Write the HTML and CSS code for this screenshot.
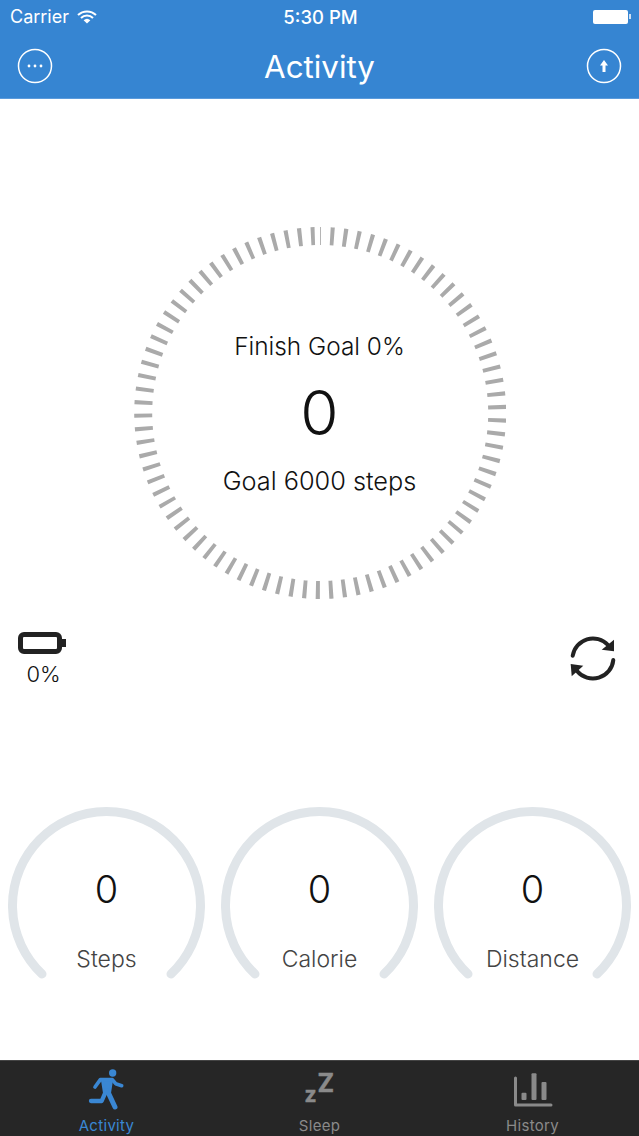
FILE: index.html
```html
<!DOCTYPE html>
<html lang="en">
<head>
  <meta charset="UTF-8">
  <meta name="viewport" content="width=device-width, initial-scale=1.0">
  <title>Activity</title>
  <link rel="stylesheet" href="styles.css">
</head>
<body>

  <!-- Status bar + nav -->
  <header class="top">
    <div class="status">
      <div class="status-left">
        <span>Carrier</span>
        <svg class="wifi" viewBox="0 0 20 14" width="20" height="14">
          <path d="M1 5 A13 13 0 0 1 19 5" fill="none" stroke="#fff" stroke-width="2"/>
          <path d="M4 8 A8.5 8.5 0 0 1 16 8" fill="none" stroke="#fff" stroke-width="2"/>
          <path d="M10 13.5 L6.6 10.3 A5 5 0 0 1 13.4 10.3 Z" fill="#fff"/>
        </svg>
      </div>
      <div class="status-time">5:30 PM</div>
      <div class="status-right">
        <span class="batt-body"></span><span class="batt-tip"></span>
      </div>
    </div>
    <nav class="nav">
      <svg viewBox="0 0 36 36" width="36" height="36">
        <circle cx="18" cy="18" r="16.5" fill="none" stroke="#fff" stroke-width="1.5"/>
        <circle cx="12" cy="18" r="1.4" fill="#fff"/>
        <circle cx="18" cy="18" r="1.4" fill="#fff"/>
        <circle cx="24" cy="18" r="1.4" fill="#fff"/>
      </svg>
      <h1>Activity</h1>
      <svg viewBox="0 0 36 36" width="36" height="36">
        <circle cx="18" cy="18" r="16.5" fill="none" stroke="#fff" stroke-width="1.5"/>
        <path d="M18 12 L22 17.5 H19.5 V24 H16.5 V17.5 H14 Z" fill="#fff"/>
      </svg>
    </nav>
  </header>

  <main class="content">
    <section class="dial">
      <svg class="dial-ring" viewBox="0 0 372 372" width="372" height="372">
        <path class="ticks" d="M196.2 9.3 A177 177 0 1 1 180.8 9.1"/>
        <line x1="186.500" y1="0" x2="186.500" y2="18" stroke="#b5b5b5" stroke-width="1"/>
      </svg>
      <div class="dial-text">
        <div class="dial-goal">Finish Goal 0%</div>
        <div class="dial-value">0</div>
        <div class="dial-steps">Goal 6000 steps</div>
      </div>
    </section>

    <section class="device">
      <div class="battery">
        <svg viewBox="0 0 48 22" width="48" height="22">
          <rect x="2.500" y="2.500" width="39" height="17" rx="3.500" fill="none" stroke="#222" stroke-width="5"/>
          <rect x="44" y="7" width="4" height="8" fill="#222"/>
        </svg>
        <span>0%</span>
      </div>
      <svg class="sync" viewBox="0 0 48 48" width="48" height="48">
        <path d="M2.700 20.700 A20.500 20.500 0 0 1 38 10" fill="none" stroke="#222" stroke-width="4" stroke-linecap="round"/>
        <path d="M44 4.700 V16.300 L31.700 14.700 Z" fill="#222"/>
        <path d="M43.300 25 A20.500 20.500 0 0 1 7 36" fill="none" stroke="#222" stroke-width="4" stroke-linecap="round"/>
        <path d="M0.700 29 L13.300 30.700 L1.700 41.300 Z" fill="#222"/>
      </svg>
    </section>

    <section class="gauges">
      <div class="gauge">
        <svg viewBox="0 0 197 175" width="197" height="175">
          <path class="gauge-arc" d="M34 168 A94 94 0 1 1 163 168"/>
        </svg>
        <div class="gauge-value">0</div>
        <div class="gauge-label">Steps</div>
      </div>
      <div class="gauge">
        <svg viewBox="0 0 197 175" width="197" height="175">
          <path class="gauge-arc" d="M34 168 A94 94 0 1 1 163 168"/>
        </svg>
        <div class="gauge-value">0</div>
        <div class="gauge-label">Calorie</div>
      </div>
      <div class="gauge">
        <svg viewBox="0 0 197 175" width="197" height="175">
          <path class="gauge-arc" d="M34 168 A94 94 0 1 1 163 168"/>
        </svg>
        <div class="gauge-value">0</div>
        <div class="gauge-label">Distance</div>
      </div>
    </section>
  </main>

  <footer class="tabbar">
    <div class="tab active">
      <svg viewBox="260 55 120 126" width="40" height="42">
        <circle cx="337" cy="70" r="11" fill="#3a87d3"/>
        <path d="M284 112 L300 90 H336 L346 102 L364 108" fill="none" stroke="#3a87d3" stroke-width="11" stroke-linecap="round" stroke-linejoin="round"/>
        <path d="M306 92 H334 L328 130 H312 Z" fill="#3a87d3" stroke="#3a87d3" stroke-width="8" stroke-linejoin="round"/>
        <path d="M322 125 L344 172" fill="none" stroke="#3a87d3" stroke-width="15" stroke-linecap="round"/>
        <path d="M318 122 L304 154 H272" fill="none" stroke="#3a87d3" stroke-width="13" stroke-linecap="round" stroke-linejoin="round"/>
      </svg>
      <span>Activity</span>
    </div>
    <div class="tab">
      <svg viewBox="0 0 40 42" width="40" height="42">
        <text x="4.500" y="34" class="zz-small">z</text>
        <text x="17.500" y="24" class="zz-big">Z</text>
      </svg>
      <span>Sleep</span>
    </div>
    <div class="tab">
      <svg viewBox="0 0 40 42" width="40" height="42">
        <path d="M2.500 10 V37 H38" fill="none" stroke="#8a8a8a" stroke-width="3" stroke-linecap="round" stroke-linejoin="round"/>
        <rect x="8.500" y="24.700" width="5" height="7.300" rx="1" fill="#8a8a8a"/>
        <rect x="18.500" y="5.300" width="5" height="26.700" rx="1" fill="#8a8a8a"/>
        <rect x="28.500" y="14" width="5" height="18" rx="1" fill="#8a8a8a"/>
      </svg>
      <span>History</span>
    </div>
  </footer>

</body>
</html>
```

FILE: styles.css
```css
* {
  box-sizing: border-box;
}
html, body {
  margin: 0;
  padding: 0;
}
body {
  width: 639px;
  height: 1136px;
  display: flex;
  flex-direction: column;
  background-color: #fff;
  color: #111;
  font-family: Inter, "Liberation Sans", sans-serif;
  overflow: hidden;
}

/* top blue bar */
.top {
  height: 99px;
  background-color: #3685d2;
  border-bottom: 1px solid #5b9bdc;
  color: #fff;
  padding: 0 10px;
}
.status {
  height: 33px;
  margin-right: -2px;
  display: grid;
  grid-template-columns: 1fr auto 1fr;
  align-items: center;
  font-size: 18px;
}
.status-left {
  display: flex;
  align-items: center;
  gap: 8px;
}
.status-time {
  font-size: 18.500px;
  font-weight: 500;
}
.status-right {
  display: flex;
  justify-content: flex-end;
  align-items: center;
}
.batt-body {
  width: 35px;
  height: 14px;
  background-color: #fff;
  border-radius: 2px;
}
.batt-tip {
  width: 2px;
  height: 5px;
  margin-left: 1px;
  background-color: #cfe0f3;
}
.nav {
  display: flex;
  justify-content: space-between;
  align-items: center;
  padding: 0 7px;
  height: 66px;
}
.nav h1 {
  margin: 2px 0 0;
  font-size: 31.300px;
  font-weight: 400;
}

.content {
  flex: 1;
  display: flex;
  flex-direction: column;
}

/* big dial */
.dial {
  display: grid;
  justify-content: center;
  align-items: center;
  padding-top: 128px;
}
.dial-ring, .dial-text {
  grid-area: 1 / 1;
}
.ticks {
  fill: none;
  stroke: #aaa;
  stroke-width: 18;
  stroke-dasharray: 4 9;
}
.dial-text {
  text-align: center;
  font-weight: 300;
}
.dial-goal {
  font-size: 24.400px;
}
.dial-steps {
  font-size: 25.300px;
}
.dial-value {
  font-size: 62px;
  line-height: 80px;
  margin: 12px 0;
}

/* battery + sync row */
.device {
  display: flex;
  justify-content: space-between;
  padding: 33px 21px 0 18px;
}
.battery {
  display: flex;
  flex-direction: column;
  align-items: center;
  width: 48px;
  gap: 7px;
  font-size: 22px;
  font-weight: 300;
}
.battery span {
  margin-left: 3px;
}
.sync {
  margin-top: 3px;
}

/* three small gauges */
.gauges {
  display: flex;
  justify-content: space-between;
  padding: 119px 8px 0;
}
.gauge {
  display: grid;
  justify-items: center;
  width: 197px;
}
.gauge svg {
  grid-area: 1 / 1;
}
.gauge-arc {
  fill: none;
  stroke: #e0e5e9;
  stroke-width: 9;
  stroke-linecap: round;
}
.gauge-value {
  grid-area: 1 / 1;
  font-size: 38px;
  font-weight: 300;
  margin-top: 60px;
}
.gauge-label {
  grid-area: 1 / 1;
  font-size: 23px;
  font-weight: 300;
  color: #444;
  margin-top: 139px;
}

/* bottom tabs */
.tabbar {
  height: 76px;
  display: grid;
  grid-template-columns: repeat(3, 213px);
  background-color: #262626;
  border-top: 1px solid #444;
}
.tab {
  display: flex;
  flex-direction: column;
  align-items: center;
  padding-top: 7px;
  font-size: 15px;
  color: #8a8a8a;
}
.tab span {
  margin-top: 6px;
  letter-spacing: 0.3px;
}
.tab.active {
  color: #3a87d3;
}
.zz-small, .zz-big {
  fill: #8a8a8a;
  stroke: #8a8a8a;
  stroke-width: 0.5;
  font-weight: 700;
}
.zz-small {
  font-size: 21px;
}
.zz-big {
  font-size: 25px;
}
```
